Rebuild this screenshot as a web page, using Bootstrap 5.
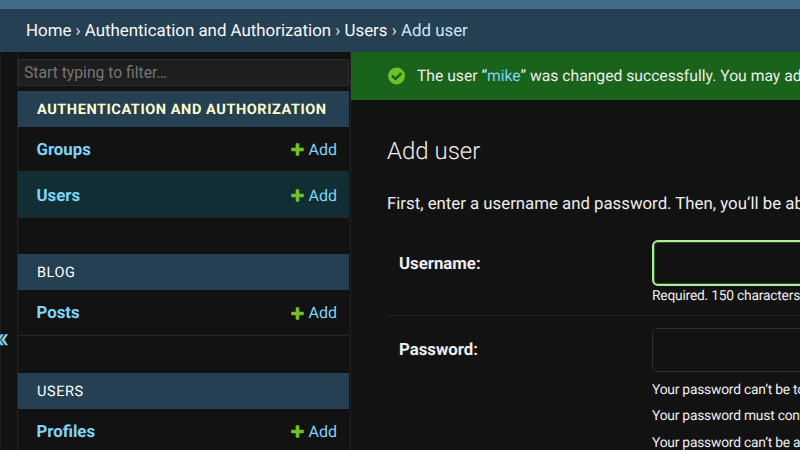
<!DOCTYPE html>
<html lang="en">
<head>
<meta charset="utf-8">
<meta name="viewport" content="width=device-width, initial-scale=1">
<title>Add user</title>
<link rel="stylesheet" href="https://cdn.jsdelivr.net/npm/bootstrap@5.3.0/dist/css/bootstrap.min.css">
<style>
body{background:#121212;color:#eee;font:400 16.8px/20px Roboto,"Liberation Sans",sans-serif;height:450px;overflow:hidden;white-space:nowrap;text-rendering:geometricPrecision}
a{text-decoration:none;color:#81d4fa}
.brandbar{height:9px;background:#416b86}
.crumbs{height:43px;background:#264053;padding-left:26px;padding-top:1px;font-size:16.88px;color:#e4eef5}
.crumbs a{color:#f7f7f7}
.crumbs .current{color:#c9e4f5}
.page{height:398px}
.toggler{width:18px;border-left:1px solid #1d1d1d;border-right:1px solid #252525;color:#81d4fa;font-size:27px}
.toggler span{margin-top:276px;margin-left:-5px;line-height:20px;-webkit-text-stroke:.5px #81d4fa}
.side{width:333px;border-right:1px solid #252525;padding-right:1px}
.filter{height:27px;margin:7px 0 5px;background:#1e1e1e;border:1px solid #2c2c2c;border-radius:0;color:#757575;font-size:15.7px;padding:0 5px 1px;line-height:20px;box-shadow:none}
.filter::placeholder{color:#757575}
.app{height:36px;background:#264053;color:#fff;font-size:14.5px;letter-spacing:.57px;padding:2px 0 0 19px;margin:0}
.app.active-app{color:#ffc;font-weight:700}
.model{height:46px;border-bottom:1px solid #272727;padding:1px 12px 0 18.5px}
.model.short{height:45px;padding-top:1px}
.model.on{background:#102e33;padding-top:2px}
.model strong{font-weight:700}
.model .add-link{font-size:16px}
.model svg{margin-right:5px}
.gap-a{height:36px}.gap-b{height:37px}
.msg{height:48px;background:#19631a;padding-left:37px;font-size:15.7px}
.msg-text{margin-left:11px}
.main-pane{padding-left:36px}
h1{font-weight:300;font-size:24px;line-height:30px;margin:36px 0 28px}
.lead-in{font-size:16.8px;margin:0}
.field{border-bottom:1px solid #232323}
.lab{width:265px;padding-left:12px;font-weight:700;font-size:16.8px}
.box{width:300px;height:44px;background:#121212;border:1px solid #2f2f2f;border-radius:6px;color:#eee}
.box.focused{height:46px;border:2px solid #b4eba0;box-shadow:inset 0 0 0 1px #1f5c14}
.help{font-size:13.8px;letter-spacing:-.21px;line-height:20px}
.first-field{margin-top:26px;height:76px}
.first-field .lab{padding-top:14px}
.second-field{padding-top:12px}
.second-field .lab{padding-top:12px}
.rule-list{padding-top:4.5px}
.rule-list div{line-height:26.5px}
</style>
<script src="https://cdn.jsdelivr.net/npm/bootstrap@5.3.0/dist/js/bootstrap.bundle.min.js"></script>
</head>
<body>
<svg class="d-none"><symbol id="plus" viewBox="0 0 13 13"><path d="M4.7 1Q4.7.2 5.5.2h2q.8 0 .8.8v3.7H12q.8 0 .8.8v2q0 .8-.8.8H8.3V12q0 .8-.8.8h-2q-.8 0-.8-.8V8.3H1q-.8 0-.8-.8v-2q0-.8.8-.8h3.7z" fill="#70bf2b"/></symbol></svg>
<header>
<div class="brandbar"></div>
<nav class="crumbs d-flex align-items-center"><div><a href="#">Home</a> › <a href="#">Authentication and Authorization</a> › <a href="#">Users</a> › <span class="current">Add user</span></div></nav>
</header>
<div class="page d-flex">
<div class="toggler flex-shrink-0 d-flex align-items-start"><span>«</span></div>
<aside class="side flex-shrink-0">
<input class="filter form-control" placeholder="Start typing to filter…">
<div class="app active-app d-flex align-items-center">AUTHENTICATION AND AUTHORIZATION</div>
<div class="model short d-flex align-items-center justify-content-between"><a href="#"><strong>Groups</strong></a><a href="#" class="add-link d-flex align-items-center"><svg width="13" height="13"><use href="#plus"/></svg>Add</a></div>
<div class="model on d-flex align-items-center justify-content-between"><a href="#"><strong>Users</strong></a><a href="#" class="add-link d-flex align-items-center"><svg width="13" height="13"><use href="#plus"/></svg>Add</a></div>
<div class="gap-a"></div>
<div class="app d-flex align-items-center">BLOG</div>
<div class="model d-flex align-items-center justify-content-between"><a href="#"><strong>Posts</strong></a><a href="#" class="add-link d-flex align-items-center"><svg width="13" height="13"><use href="#plus"/></svg>Add</a></div>
<div class="gap-b"></div>
<div class="app d-flex align-items-center">USERS</div>
<div class="model short d-flex align-items-center justify-content-between"><a href="#"><strong>Profiles</strong></a><a href="#" class="add-link d-flex align-items-center"><svg width="13" height="13"><use href="#plus"/></svg>Add</a></div>
</aside>
<main class="flex-grow-1 overflow-hidden">
<div class="msg d-flex align-items-center"><svg width="18" height="18" viewBox="0 0 18 18" class="flex-shrink-0"><circle cx="8.6" cy="9" r="8.5" fill="#70bf2b"/><path d="M4 8.6l3.5 3.4 5.8-5.8" fill="none" stroke="#19631a" stroke-width="2.4"/></svg><span class="msg-text">The user “<a href="#">mike</a>” was changed successfully. You may add another user below.</span></div>
<div class="main-pane">
<h1>Add user</h1>
<p class="lead-in">First, enter a username and password. Then, you’ll be able to edit more user options.</p>
<div class="field d-flex first-field"><label class="lab flex-shrink-0" for="u">Username:</label><div><input id="u" class="box focused d-block"><div class="help">Required. 150 characters or fewer.</div></div></div>
<div class="d-flex second-field"><label class="lab flex-shrink-0" for="p">Password:</label><div><input id="p" class="box d-block"><div class="help rule-list"><div>Your password can’t be too similar to your other personal information.</div><div>Your password must contain at least 8 characters.</div><div>Your password can’t be a commonly used password.</div></div></div></div>
</div>
</main>
</div>
</body>
</html>
